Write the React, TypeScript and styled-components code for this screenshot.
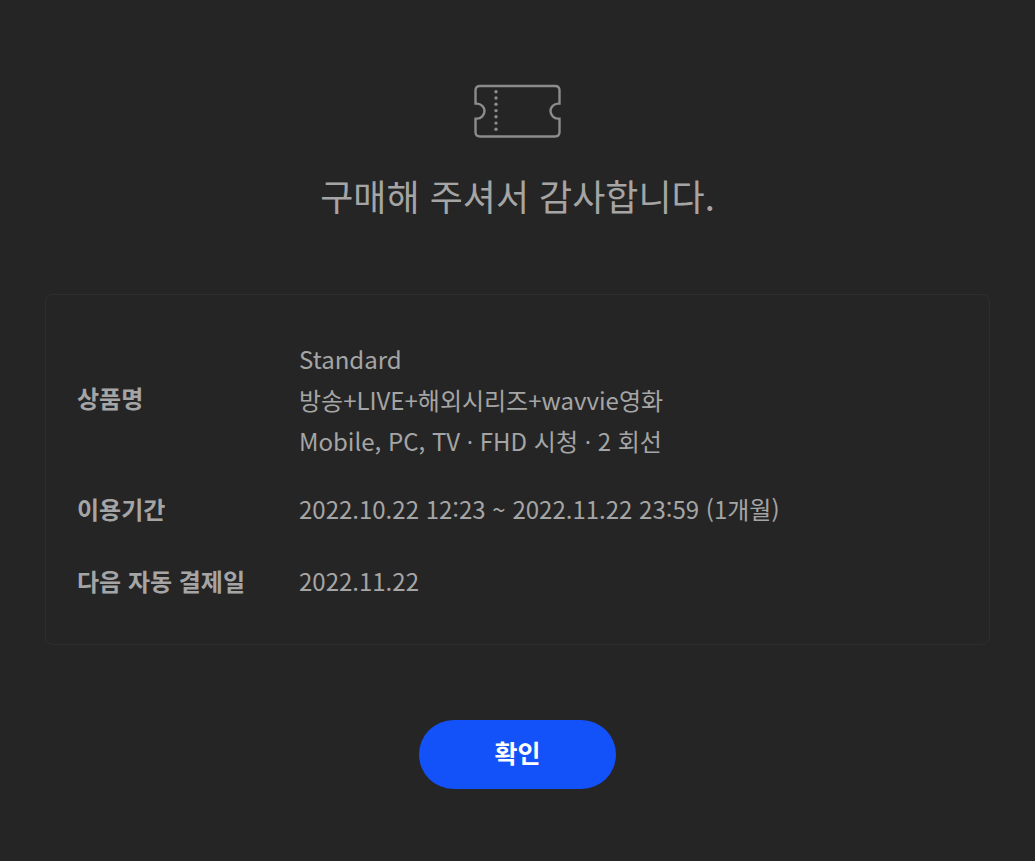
import React from "react";
import styled, { createGlobalStyle } from "styled-components";

const GlobalStyle = createGlobalStyle`
  * { box-sizing: border-box; }
  body {
    margin: 0;
    background: #252525;
    color: #a5a5a5;
    font-family: "Noto Sans CJK KR", "Noto Sans", sans-serif;
  }
`;

const Page = styled.main`
  display: flex;
  flex-direction: column;
  align-items: center;
  min-height: 100vh;
  padding: 84px 45px 72px;
`;

const TicketIcon = styled.svg`
  display: block;
  width: 87px;
  height: 54px;
`;

const Title = styled.h1`
  margin: 31px 0 73px;
  font-size: 36px;
  line-height: 52px;
  font-weight: 400;
  text-align: center;
`;

const Card = styled.section`
  width: 100%;
  padding: 43px 31px 11px;
  border: 1px solid #2e2e2e;
  border-radius: 8px;
`;

const Details = styled.table`
  width: 100%;
  border-collapse: collapse;
  font-size: 24px;
  line-height: 40px;
`;

const Label = styled.th`
  width: 222px;
  padding: 0 0 32px;
  font-weight: 700;
  text-align: left;
  white-space: nowrap;
`;

const Value = styled.td`
  padding: 0 0 32px;
`;

const ProductLines = styled.div`
  margin-bottom: -4px;
  line-height: 41px;
`;

const Separator = styled.span`
  font-family: "Open Sans", "Noto Sans", sans-serif;
  line-height: 1;
`;

const ConfirmButton = styled.button`
  width: 197px;
  height: 69px;
  margin-top: 75px;
  padding: 0 0 6px;
  border: 0;
  border-radius: 35px;
  background: #1351f9;
  color: #fff;
  font: inherit;
  font-size: 25px;
  font-weight: 700;
  cursor: pointer;
`;

const perforations = [7.8, 14, 20.3, 26.6, 32.8, 39.1, 45.3];

export default function App() {
  return (
    <Page lang="ko">
      <GlobalStyle />
      <TicketIcon viewBox="0.5 0 87 54" aria-hidden="true">
        <path
          d="M6.500 2H81.500Q86 2 86 6.500V19.600H84.500A7.500 7.500 0 0 0 84.500 34.600H86V48Q86 52.500 81.500 52.500H6.500Q2 52.500 2 48V34.600H3.500A7.500 7.500 0 0 0 3.500 19.600H2V6.500Q2 2 6.500 2Z"
          fill="none"
          stroke="#8c8c8c"
          strokeWidth="2.4"
        />
        {perforations.map((y) => (
          <circle key={y} cx="22.5" cy={y} r="1.7" fill="#8c8c8c" />
        ))}
      </TicketIcon>
      <Title>구매해 주셔서 감사합니다.</Title>
      <Card>
        <Details>
          <tbody>
            <tr>
              <Label scope="row">상품명</Label>
              <Value>
                <ProductLines>
                  Standard
                  <br />
                  방송+LIVE+해외시리즈+wavvie영화
                  <br />
                  Mobile, PC, TV <Separator>·</Separator> FHD 시청 <Separator>·</Separator> 2 회선
                </ProductLines>
              </Value>
            </tr>
            <tr>
              <Label scope="row">이용기간</Label>
              <Value>2022.10.22 12:23 ~ 2022.11.22 23:59 (1개월)</Value>
            </tr>
            <tr>
              <Label scope="row">다음 자동 결제일</Label>
              <Value>2022.11.22</Value>
            </tr>
          </tbody>
        </Details>
      </Card>
      <ConfirmButton type="button">확인</ConfirmButton>
    </Page>
  );
}
